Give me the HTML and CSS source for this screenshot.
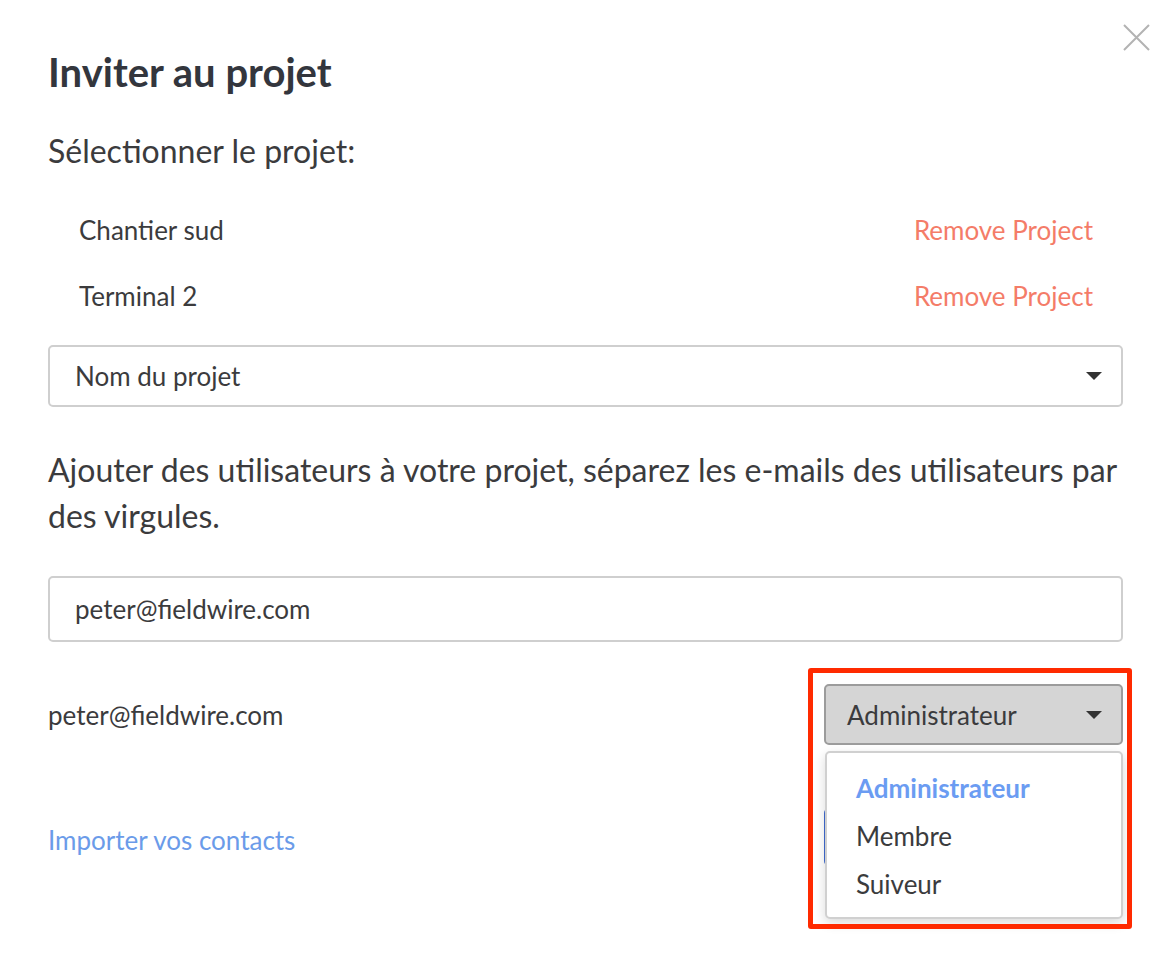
FILE: index.html
```html
<!DOCTYPE html>
<html lang="fr">

<head>
    <meta charset="UTF-8">
    <title>Inviter au projet</title>
    <link rel="stylesheet" href="styles.css">
</head>

<body>
    <div class="modal">
        <a class="close" href="#" aria-label="Fermer">
            <svg width="27" height="27" viewBox="0 0 27 27">
                <path d="M1 1 L26 26 M26 1 L1 26" stroke="#b3b3b3" stroke-width="2" fill="none" />
            </svg>
        </a>

        <h1 class="title">Inviter au projet</h1>
        <p class="label">Sélectionner le projet:</p>

        <!-- projets choisis -->
        <ul class="projects">
            <li><span>Chantier sud</span><a href="#" class="remove">Remove Project</a></li>
            <li><span>Terminal 2</span><a href="#" class="remove">Remove Project</a></li>
        </ul>

        <div class="select">
            <span>Nom du projet</span>
            <i class="caret"></i>
        </div>

        <p class="label para">Ajouter des utilisateurs à votre projet, séparez les e-mails des utilisateurs par des virgules.</p>

        <div class="input">peter@fieldwire.com</div>

        <div class="user_row">
            <span>peter@fieldwire.com</span>
            <div class="role">
                <div class="role_btn">
                    <span>Administrateur</span>
                    <i class="caret"></i>
                </div>
                <ul class="menu">
                    <li class="active">Administrateur</li>
                    <li>Membre</li>
                    <li>Suiveur</li>
                </ul>
                <div class="highlight"></div>
            </div>
        </div>

        <div class="footer">
            <a href="#" class="link">Importer vos contacts</a>
            <!-- bouton caché sous le menu -->
            <button class="send" aria-label="Inviter"></button>
        </div>
    </div>
</body>

</html>
```

FILE: styles.css
```css
body,
h1,
p,
ul,
li {
    margin: 0;
    padding: 0;
}

body {
    background: #fff;
    font-family: Lato, "Open Sans", sans-serif;
    color: #3b3b3d;
    min-height: 972px;
}

ul {
    list-style: none;
}

a {
    text-decoration: none;
}

.modal {
    position: relative;
    width: 1075px;
    padding: 50px 0 106px 48px;
}

.close {
    position: absolute;
    top: 24px;
    left: 1123px;
    display: block;
    width: 27px;
    height: 27px;
}

.title {
    font-size: 40px;
    line-height: 44px;
    font-weight: 700;
    color: #33363d;
}

.label {
    font-size: 32px;
    line-height: 40px;
    margin-top: 37px;
}

.projects {
    margin-top: 26px;
    padding: 0 30px 0 31px;
}

.projects li {
    display: flex;
    justify-content: space-between;
    font-size: 26px;
    line-height: 66px;
}

.remove {
    color: #f47c68;
}

.select,
.input {
    box-sizing: border-box;
    border: 2px solid #cfcfcf;
    border-radius: 5px;
    font-size: 26px;
    display: flex;
    align-items: center;
}

.select {
    margin-top: 16px;
    height: 62px;
    padding: 0 19px 0 25px;
    justify-content: space-between;
}

.caret {
    display: block;
    width: 0;
    height: 0;
    border-left: 8px solid transparent;
    border-right: 8px solid transparent;
    border-top: 8px solid #333;
}

.para {
    margin-top: 40px;
    line-height: 46px;
}

.input {
    margin-top: 37px;
    height: 66px;
    padding-left: 25px;
}

.user_row {
    margin-top: 42px;
    display: flex;
    justify-content: space-between;
    align-items: center;
    font-size: 26px;
}

.role {
    position: relative;
    width: 299px;
}

.role_btn {
    box-sizing: border-box;
    height: 61px;
    display: flex;
    align-items: center;
    justify-content: space-between;
    padding: 0 19px 0 21px;
    background: #d5d5d5;
    border: 2px solid #9c9c9c;
    border-radius: 5px;
}

.menu {
    position: absolute;
    z-index: 2;
    top: 67px;
    left: 1px;
    right: 0;
    padding: 11px 0 9px 29px;
    background: #fff;
    border: 2px solid #d0d0d0;
    border-radius: 5px;
    box-shadow: 0 4px 12px rgba(0, 0, 0, 0.15);
}

.menu li {
    line-height: 48px;
}

.menu .active {
    color: #6b9cf2;
    font-weight: 700;
}

/* cadre rouge d'annotation */
.highlight {
    position: absolute;
    z-index: 3;
    top: -16px;
    left: -16px;
    width: 324px;
    height: 261px;
    box-sizing: border-box;
    border: 5px solid #ff2a00;
    border-radius: 3px;
}

.footer {
    margin-top: 63px;
    display: flex;
    justify-content: space-between;
    align-items: center;
}

.link {
    font-size: 26px;
    color: #6b9be9;
    padding-top: 6px;
}

.send {
    width: 299px;
    height: 58px;
    background: #3f6bd0;
    border: 0;
    border-radius: 5px;
}
```
